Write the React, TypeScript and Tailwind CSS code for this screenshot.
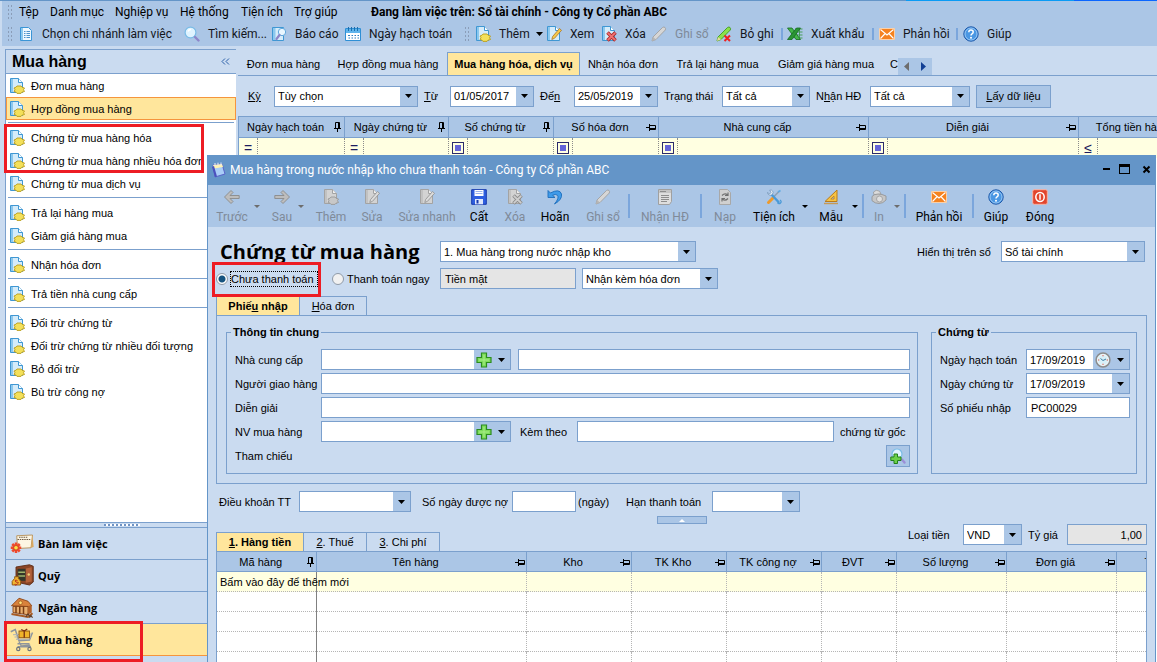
import { useState } from 'react';
import type { ReactNode } from 'react';
import clsx from 'clsx';

/* ---------- icons ---------- */

type IconProps = { gray?: boolean };

function PageShape({ gray }: IconProps) {
  return (
    <>
      <path d="M1.5 .5h8l4 4v10h-12z" fill={gray ? '#d3d3d3' : '#d5ecfa'} stroke={gray ? '#a3a3a3' : '#3f97d3'} />
      <path d="M9.5 .5v4h4" fill={gray ? '#eee' : '#fff'} stroke={gray ? '#a3a3a3' : '#3f97d3'} />
      <path d="M2 1h2v13H2z" fill={gray ? '#c2c2c2' : '#8cc8ee'} />
    </>
  );
}

function Svg({ children, size = 16 }: { children: ReactNode; size?: number }) {
  return (
    <svg width={size} height={size} viewBox="0 0 16 16" fill="none" className="shrink-0">
      {children}
    </svg>
  );
}

const DocNewIcon = ({ gray }: IconProps) => (
  <Svg>
    <PageShape gray={gray} />
    <path
      d="M5 10l2-.8L8 8h4l1 1.2 2.500.8-1 1.700 1 1.800-2.500.7-1 1.200H8l-1-1.200-2-.7 1-1.800z"
      fill={gray ? '#c8c8c8' : '#f3e05a'}
      stroke={gray ? '#999' : '#b99c1c'}
      strokeWidth=".9"
    />
  </Svg>
);

const DocEditIcon = ({ gray }: IconProps) => (
  <Svg>
    <PageShape gray={gray} />
    <path
      d="M13.5 2.5l2 1.8-7 8-2.7 1.2.8-3z"
      fill={gray ? '#dcdcdc' : '#f7c948'}
      stroke={gray ? '#8f8f8f' : '#a8752a'}
      strokeWidth=".8"
    />
  </Svg>
);

const DocDeleteIcon = ({ gray }: IconProps) => (
  <Svg>
    <PageShape gray={gray} />
    <path d="M6.5 6.5l8 8M14.5 6.5l-8 8" stroke={gray ? '#8c8c8c' : '#b02a2a'} strokeWidth="3.6" />
    <path d="M6.8 6.8l7.4 7.4M14.2 6.8l-7.4 7.4" stroke={gray ? '#cfcfcf' : '#ee7373'} strokeWidth="1.8" />
  </Svg>
);

const ListIcon = () => (
  <Svg>
    <path d="M2.5 1.5h8l3 3v10h-11z" fill="#eef8ff" stroke="#3b95d6" />
    <path d="M3 2h2v12H3z" fill="#8cc8ee" />
    <path d="M6 5.5h1.5M8.500 5.5H12M6 7.5h1.5M8.5 7.5H12M6 9.5h1.5M8.5 9.5H12M6 11.5h1.5M8.5 11.5H12" stroke="#4d93cc" />
  </Svg>
);

const SearchIcon = () => (
  <Svg>
    <circle cx="6.5" cy="6.5" r="5.4" fill="#dff3ff" stroke="#79bbe6" strokeWidth="1.2" />
    <path d="M4 5.5a3 3 0 0 1 3-2" stroke="#fff" strokeWidth="1.4" />
    <path d="M11 11l3.500 3.500" stroke="#8d86c9" strokeWidth="2.4" strokeLinecap="round" />
  </Svg>
);

const ReportIcon = () => (
  <Svg>
    <path d="M1.5 1.5h11v13h-11z" fill="#d5ecfa" stroke="#3f97d3" />
    <path d="M2 2h2.500v12H2z" fill="#8cc8ee" />
    <circle cx="11" cy="6" r="3.7" fill="#e9f7ff" stroke="#5fa7dc" />
    <path d="M8.500 9l-3 4" stroke="#8d86c9" strokeWidth="2.2" strokeLinecap="round" />
  </Svg>
);

const CalendarIcon = () => (
  <Svg>
    <path d="M.5 2.500h15v12H.5z" fill="#fff" stroke="#2f8fd5" />
    <path d="M1 3h14v4H1z" fill="#5fb4ec" />
    <path d="M3.5 1v4M6.5 1v4M9.5 1v4M12.5 1v4" stroke="#1c6fae" />
    <path d="M3 9.5h2M6.5 9.5H8M9.5 9.5H11M12.5 9.5H14M3.5 12H5M6.5 12H8M9.5 12H11M12.5 12H14" stroke="#2f7fc0" />
  </Svg>
);

const PencilIcon = ({ gray }: IconProps) => (
  <Svg>
    <path
      d="M1 15l1-4L11.5 1.5q1.5-1 2.5 0t.3 2.5L5 13.5z"
      fill={gray ? '#d6d6d6' : '#8ae04a'}
      stroke={gray ? '#a0a0a0' : '#3f9c1e'}
      strokeWidth=".9"
    />
    <path d="M1 15l1-4 3 2.5z" fill={gray ? '#b5b5b5' : '#e9d9a0'} />
    {!gray && <path d="M8.500 9.5l5.500 5.500M14 9.5L8.500 15" stroke="#ee2020" strokeWidth="2" />}
  </Svg>
);

const ExcelIcon = () => (
  <Svg>
    <path d="M8 3h7.500M9 6h6.500M10 9h5.500M8 12h7.500M12.5 2v12" stroke="#3d9a4a" strokeWidth=".9" />
    <path d="M.5 2H5l8.500 11.500H9z" fill="#43b649" stroke="#156b20" strokeWidth=".8" />
    <path d="M9.500 2h4L5 13.500H.5z" fill="#2a9434" stroke="#156b20" strokeWidth=".8" />
  </Svg>
);

const MailIcon = () => (
  <Svg>
    <path d="M.5 2.500h15v11H.5z" fill="#f5821f" stroke="#fbd0a8" />
    <path d="M1.5 3.5L8 9l6.500-5.500M1.5 12.500l4.700-5M14.500 12.500l-4.700-5" stroke="#fff" strokeWidth="1.1" />
  </Svg>
);

const HelpIcon = () => (
  <Svg>
    <circle cx="8" cy="8" r="7.2" fill="#4a97e3" stroke="#1c57a8" />
    <circle cx="8" cy="8" r="6" stroke="#a9d2f8" strokeWidth=".8" />
    <path d="M5.800 6.200q0-2.200 2.200-2.200t2.200 2q0 1.200-1.200 1.900-1 .6-1 1.600" stroke="#fff" strokeWidth="1.5" />
    <circle cx="8" cy="11.8" r="1" fill="#fff" />
  </Svg>
);

const ArrowIcon = ({ right }: { right?: boolean }) => (
  <Svg>
    <path
      d={right ? 'M15.5 8L9 1.5l-2 2 3 3H.8v3H10l-3 3 2 2z' : 'M.5 8L7 1.5l2 2-3 3h9.200v3H6l3 3-2 2z'}
      fill="#bdbdbd"
      stroke="#8a8a8a"
      strokeWidth=".9"
    />
  </Svg>
);

const SaveIcon = () => (
  <Svg>
    <path d="M.7.7h14.600v14.600H.7z" fill="#2f5fe0" stroke="#1639ac" />
    <path d="M3.5 1h9v6h-9z" fill="#fff" />
    <path d="M4.5 2.5h7M4.5 4.5h7" stroke="#9bb3ee" />
    <path d="M4 10h8v5.300H4z" fill="#dfe7fb" />
    <path d="M5.5 11h2v3.500h-2z" fill="#1639ac" />
  </Svg>
);

const UndoIcon = () => (
  <Svg>
    <path
      d="M1 1.5v7h7L5.600 6.300q3-1.800 4.900 0 2 2.700-3 8.700 8-4.500 7-10Q12.500-.8 3.400 4z"
      fill="#3f9bea"
      stroke="#1d6dbb"
      strokeWidth=".9"
    />
  </Svg>
);

const InvoiceIcon = () => (
  <Svg>
    <path d="M1.5 .5h13v12l-2 3h-11z" fill="#dedede" stroke="#a0a0a0" />
    <path d="M2 1h12v3H2z" fill="#c4c4c4" />
    <path d="M3 2.5h6M4 6.5h8M4 8.5h8M4 10.5h8M4 12.5h6" stroke="#8d8d8d" />
  </Svg>
);

const ReloadIcon = () => (
  <Svg>
    <path d="M2.5 .5h8l3 3v12h-11z" fill="#d0d0d0" stroke="#a8a8a8" />
    <path d="M5 6.500q3-3 5.500-.5M8 6.500h3V3.500M11 9.500q-3 3-5.500.5M8 9.500H5v3" stroke="#707070" strokeWidth="1.2" />
  </Svg>
);

const ToolsIcon = () => (
  <Svg>
    <path d="M13 2.500L7.500 8" stroke="#8da0b5" strokeWidth="1.6" />
    <path d="M7.500 8.500l-5 5" stroke="#ee9a2b" strokeWidth="3" strokeLinecap="round" />
    <path d="M5 5l7.500 8" stroke="#4a9ad8" strokeWidth="2.4" strokeLinecap="round" />
    <path d="M1.5 3.5l2 1.5L5 3.500 3.700 1.200q2-.6 3 .9t-.3 3.200-3.200.7-1.700-2.500z" fill="#e3edf7" stroke="#6c8fb5" strokeWidth=".7" />
    <path d="M11.5 13.500q1.500 2 3 .5t-.5-3" stroke="#4a9ad8" strokeWidth="1.3" />
    <path d="M12 3l2.500-1.500" stroke="#5fa9e0" strokeWidth="1.6" />
  </Svg>
);

const SetSquareIcon = () => (
  <Svg>
    <path d="M14 1v11.500H2z" fill="#f6c343" stroke="#b97a1a" />
    <path d="M11 7.200V10H7.800z" fill="#abc6e6" stroke="#b97a1a" strokeWidth=".8" />
    <path d="M1 14.500h14" stroke="#c79a55" strokeWidth="1.4" />
  </Svg>
);

const PrinterIcon = () => (
  <Svg>
    <path d="M3 6L2.500 3q2.500-3 6-.8L10 5z" fill="#dcdcdc" stroke="#999" strokeWidth=".8" />
    <path d="M1 7.500q2-2.500 6-2.500t8 2v4q-3 3.500-7 3.500t-7-2.800z" fill="#c6c6c6" stroke="#909090" strokeWidth=".8" />
    <circle cx="8.5" cy="10" r="3" fill="#e0e0e0" stroke="#999" strokeWidth=".8" />
  </Svg>
);

const PowerIcon = () => (
  <Svg>
    <rect x=".7" y=".7" width="14.6" height="14.6" rx="1.5" fill="#e2452c" stroke="#f7b3a4" />
    <ellipse cx="8" cy="8" rx="4.2" ry="4.6" stroke="#fff" strokeWidth="1.5" />
    <path d="M8 5.200v5.600" stroke="#fff" strokeWidth="1.5" />
  </Svg>
);

const PlusIcon = () => (
  <Svg>
    <path d="M5.500 1h5v4.500H15v5h-4.500V15h-5v-4.500H1v-5h4.500z" fill="#7fdc5c" stroke="#2b8c1e" strokeWidth="1.2" />
    <path d="M8 3v10M3 8h10" stroke="#a8ee88" />
  </Svg>
);

const ClockIcon = () => (
  <Svg>
    <circle cx="8" cy="8" r="6.9" fill="#d8f0f8" stroke="#8d8d8d" strokeWidth="1.5" />
    <circle cx="8" cy="8" r="5.4" stroke="#f4f4f4" strokeWidth=".9" />
    <path d="M5.500 6.500L8 8.500l3-1.500" stroke="#3f7fa5" />
    <path d="M8 3v1.300M8 11.700V13M3 8h1.300M11.700 8H13" stroke="#e05a4a" />
  </Svg>
);

const SearchAddIcon = () => (
  <Svg>
    <circle cx="7" cy="6" r="5" fill="#dff3ff" stroke="#79bbe6" strokeWidth="1.2" />
    <path d="M12 11.500l2.500 3" stroke="#9b8fd6" strokeWidth="2.4" strokeLinecap="round" />
    <path d="M4 6h3.500v3H11v3.500H7.500v3H4v-3H.8V9H4z" fill="#6bd04a" stroke="#23801a" />
  </Svg>
);

const NoteIcon = () => (
  <Svg>
    <path d="M3 3l9-1 3 10-10 3z" fill="#a9cdf7" stroke="#5a63c8" />
    <path d="M3 3l9-1 1 3-9 1.500z" fill="#fff3b0" />
    <path d="M2 5l3 10 2-.6L4 4z" fill="#4b51bd" />
    <path d="M5 1v3M8 .7v3M11 .5v3" stroke="#e8eefb" />
  </Svg>
);

const DeskIcon = () => (
  <Svg size={24}>
    <path d="M4.500 2.500L15 2l-1 8.500-9 .5z" fill="#fdf6e3" stroke="#b58f56" strokeWidth=".6" />
    <path d="M14 10.500L15 2l.8 8z" fill="#d9a860" />
    <path d="M5 5h8.500M6 3.500h6" stroke="#6d5a44" strokeWidth=".8" strokeDasharray="1 .5" />
    <g stroke="#f04a2c" strokeWidth="1.7">
      <path d="M4 7v7M.5 10.500h7M1.500 8l5 5M6.500 8l-5 5" />
    </g>
    <circle cx="4" cy="10.5" r="1.5" fill="#ffe14a" stroke="#c03a20" strokeWidth=".5" />
  </Svg>
);

const SafeIcon = () => (
  <Svg size={24}>
    <path d="M4 2l9-1.500 2.500 1v10.500l-2.500 2L4 12z" fill="#8a4526" stroke="#5c2a14" strokeWidth=".6" />
    <path d="M5 3.200h5.500v8H5z" fill="#33362a" />
    <path d="M5.500 5.500h4.500M5.500 8h4.500" stroke="#9fb46b" strokeWidth=".9" />
    <path d="M10.500 3l4-.8v9.500l-4 .8z" fill="#b3623a" />
    <circle cx="12.5" cy="7" r=".8" fill="#f3d07a" />
    <path d="M3 8.500h3l-.5 1q2.500 2 1.500 4.500H1.500Q.5 11.500 3.200 9.500z" fill="#f2b632" stroke="#8a5310" strokeWidth=".6" />
    <path d="M5 11q-1.700-.8-1.500.3t1.500.9-.3 1.300-1.300-.3" stroke="#b3261b" strokeWidth=".6" />
  </Svg>
);

const BankIcon = () => (
  <Svg size={24}>
    <path d="M1 6.500L6 1.500l6 2 2.500 3-2 .5z" fill="#d9823c" stroke="#8b4414" strokeWidth=".6" />
    <path d="M2 7h10v5.500L2 11z" fill="#e9b070" stroke="#8b4414" strokeWidth=".6" />
    <path d="M4 7v4.500M6.500 7v4.800M9 7v5" stroke="#7a3c14" strokeWidth="1" />
    <path d="M1 12l11 2 3-2.500" stroke="#a85c24" strokeWidth="1.3" />
    <path d="M12 7l2.500-.5V11L12 12.500z" fill="#b3622a" />
    <circle cx="7" cy="4.5" r="1.2" fill="#ffe07a" stroke="#8b4414" strokeWidth=".4" />
    <path d="M10.500 14l1.500-2 1.500 2M13 14.500l1-1.500 1 1.500" stroke="#5c3a20" strokeWidth=".8" />
  </Svg>
);

const CartIcon = () => (
  <Svg size={24}>
    <path d="M.5 2.500L3.500 1l2.500 7.500L13 8l2-5" stroke="#8d949c" strokeWidth="1" />
    <path d="M2 4.500l12-.5M3 6h11M4 7.500h9" stroke="#aab0b8" strokeWidth=".7" />
    <rect x="6" y="2" width="7" height="4.5" fill="#f0b429" stroke="#8a5310" strokeWidth=".6" />
    <path d="M9.500 2v4.500M7.500 1l2 1 2-1.300" stroke="#7a3212" strokeWidth=".9" />
    <path d="M6 9l1.500 3 6-.5M5 12.500h9M5 10.500h8" stroke="#8d949c" strokeWidth=".9" />
    <circle cx="5.5" cy="14" r="1.1" stroke="#6d747c" strokeWidth=".8" />
    <circle cx="13" cy="14" r="1.1" stroke="#6d747c" strokeWidth=".8" />
  </Svg>
);

const PinIcon = ({ down }: { down?: boolean }) => (
  <svg width="10" height="10" viewBox="0 0 10 10" fill="none" stroke="#000" className="shrink-0">
    {down ? <path d="M3.500 6V.5h4V6M6.500 1v5M2 6.500h7M5.500 7v3" /> : <path d="M4 3.500h5.500v4H4M4 6.500h5M3.500 2v7M3 5.500H0" />}
  </svg>
);

const Caret = ({ gray }: IconProps) => (
  <svg width="7" height="4" viewBox="0 0 7 4" className="shrink-0">
    <path d="M0 0h7L3.500 4z" fill={gray ? '#6d6d6d' : '#000'} />
  </svg>
);

/* ---------- form controls ---------- */

type ComboProps = { id: string; label?: string; value?: string; className: string; extra?: ReactNode };

function Combo({ id, label, value = '', className, extra }: ComboProps) {
  return (
    <div className={clsx('relative h-[21px] border border-[#7ba0cd] bg-white', className)}>
      <select
        id={id}
        aria-label={label}
        defaultValue={value}
        className="block h-full w-full appearance-none bg-transparent pl-[3px] text-[11px] leading-4 outline-none"
      >
        <option>{value}</option>
      </select>
      <span className="pointer-events-none absolute inset-y-0 right-0 flex bg-[#abc6e6]">
        {extra && <span className="flex w-[19px] items-center justify-center">{extra}</span>}
        <span className="flex w-[17px] items-center justify-center">
          <Caret />
        </span>
      </span>
    </div>
  );
}

function Field({ id, label, value, className, readOnly }: { id: string; label?: string; value?: string; className?: string; readOnly?: boolean }) {
  return (
    <input
      id={id}
      type="text"
      aria-label={label}
      defaultValue={value}
      readOnly={readOnly}
      className={clsx(
        'h-[21px] min-w-0 rounded-none border border-[#7ba0cd] px-1 text-[11px] leading-4 outline-none',
        readOnly ? 'bg-[#e5e5e5]' : 'bg-white',
        className,
      )}
    />
  );
}

/* ---------- data ---------- */

const menus = [
  { label: 'Tệp', w: 'w-[31px]' },
  { label: 'Danh mục', w: 'w-[65px]' },
  { label: 'Nghiệp vụ', w: 'w-[65px]' },
  { label: 'Hệ thống', w: 'w-[61px]' },
  { label: 'Tiện ích', w: 'w-[53px]' },
  { label: 'Trợ giúp', w: 'w-[77px]' },
];

const sideGroups = [
  ['Đơn mua hàng', 'Hợp đồng mua hàng'],
  ['Chứng từ mua hàng hóa', 'Chứng từ mua hàng nhiều hóa đơn', 'Chứng từ mua dịch vụ'],
  ['Trả lại hàng mua', 'Giảm giá hàng mua'],
  ['Nhận hóa đơn'],
  ['Trả tiền nhà cung cấp'],
  ['Đối trừ chứng từ', 'Đối trừ chứng từ nhiều đối tượng', 'Bỏ đối trừ', 'Bù trừ công nợ'],
];

const modules = [
  { label: 'Bàn làm việc', icon: <DeskIcon /> },
  { label: 'Quỹ', icon: <SafeIcon /> },
  { label: 'Ngân hàng', icon: <BankIcon /> },
  { label: 'Mua hàng', icon: <CartIcon /> },
];

const listTabs = [
  { label: 'Đơn mua hàng', w: 'w-[91px]' },
  { label: 'Hợp đồng mua hàng', w: 'w-[118px]' },
  { label: 'Mua hàng hóa, dịch vụ', w: 'w-[133px]', active: true },
  { label: 'Nhận hóa đơn', w: 'w-[86px]' },
  { label: 'Trả lại hàng mua', w: 'w-[103px]' },
  { label: 'Giảm giá hàng mua', w: 'w-[114px]' },
];

const listColumns = [
  { label: 'Ngày hạch toán', w: 'w-[106px]', op: '=', down: true },
  { label: 'Ngày chứng từ', w: 'w-[104px]', op: '=', down: true },
  { label: 'Số chứng từ', w: 'w-[105px]', down: true },
  { label: 'Số hóa đơn', w: 'w-[105px]' },
  { label: 'Nhà cung cấp', w: 'w-[210px]' },
  { label: 'Diễn giải', w: 'w-[210px]' },
  { label: 'Tổng tiền hàng', w: 'w-[120px]', op: '≤' },
];

const itemColumns = [
  { label: 'Mã hàng', w: 'w-[99px]', down: true },
  { label: 'Tên hàng', w: 'w-[210px]' },
  { label: 'Kho', w: 'w-[105px]' },
  { label: 'TK Kho', w: 'w-[95px]' },
  { label: 'TK công nợ', w: 'w-[95px]' },
  { label: 'ĐVT', w: 'w-[75px]' },
  { label: 'Số lượng', w: 'w-[110px]' },
  { label: 'Đơn giá', w: 'w-[110px]' },
  { label: 'Thành tiền', w: 'w-[120px]' },
];

/* ---------- main window ---------- */

const Grip = () => (
  <span className="h-4 w-[5px] shrink-0 bg-[radial-gradient(#8a9db8_1px,transparent_1px)] bg-size-[3px_4px]" />
);

const Divider = ({ className }: { className?: string }) => (
  <span className={clsx('w-[2px] shrink-0 bg-[#7ba6dc]', className)} />
);

type ToolProps = { icon: ReactNode; label: string; w: string; disabled?: boolean; caret?: boolean };

function ToolButton({ icon, label, w, disabled, caret }: ToolProps) {
  return (
    <button
      disabled={disabled}
      className={clsx('flex shrink-0 items-center whitespace-nowrap', w, disabled ? 'text-[#7f8a99]' : 'text-[#14161c]')}
    >
      {icon}
      <span className="ml-2">{label}</span>
      {caret && (
        <span className="ml-[6px]">
          <Caret />
        </span>
      )}
    </button>
  );
}

function TopBars() {
  return (
    <header className="flex h-[45px] shrink-0 flex-col overflow-hidden bg-[#abc6e6] pl-[5px] font-[Roboto,'Noto_Sans',sans-serif] text-[12px] leading-4">
      <nav className="flex h-[22px] items-center whitespace-nowrap">
        <Grip />
        <span className="w-[7px] shrink-0" />
        {menus.map((m) => (
          <button key={m.label} className={clsx('shrink-0 text-left', m.w)}>
            {m.label}
          </button>
        ))}
        <strong>Đang làm việc trên: Sổ tài chính - Công ty Cổ phần ABC</strong>
      </nav>
      <div className="flex h-[22px] items-center">
        <Grip />
        <span className="w-[6px] shrink-0" />
        <ToolButton icon={<ListIcon />} label="Chọn chi nhánh làm việc" w="w-[166px]" />
        <ToolButton icon={<SearchIcon />} label="Tìm kiếm..." w="w-[87px]" />
        <ToolButton icon={<ReportIcon />} label="Báo cáo" w="w-[74px]" />
        <ToolButton icon={<CalendarIcon />} label="Ngày hạch toán" w="w-[119px]" />
        <Grip />
        <span className="w-[6px] shrink-0" />
        <ToolButton icon={<DocNewIcon />} label="Thêm" w="w-[71px]" caret />
        <ToolButton icon={<DocEditIcon />} label="Xem" w="w-[55px]" />
        <ToolButton icon={<DocDeleteIcon />} label="Xóa" w="w-[50px]" />
        <ToolButton icon={<PencilIcon gray />} label="Ghi sổ" w="w-[65px]" disabled />
        <ToolButton icon={<PencilIcon />} label="Bỏ ghi" w="w-[65px]" />
        <Divider className="mr-1 h-3" />
        <ToolButton icon={<ExcelIcon />} label="Xuất khẩu" w="w-[85px]" />
        <Divider className="mr-[5px] h-3" />
        <ToolButton icon={<MailIcon />} label="Phản hồi" w="w-[77px]" />
        <Divider className="mr-[5px] h-3" />
        <ToolButton icon={<HelpIcon />} label="Giúp" w="w-[60px]" />
      </div>
    </header>
  );
}

const RedFrame = ({ className }: { className: string }) => (
  <span className={clsx('pointer-events-none absolute z-20 border-3 border-[#ed1c24]', className)} />
);

function Sidebar() {
  const [active, setActive] = useState('Hợp đồng mua hàng');

  return (
    <aside className="flex w-[231px] shrink-0 flex-col border-t border-l border-[#7ba0cd]">
      <div className="flex h-6 shrink-0 items-center justify-between border-b border-[#7ba0cd] px-[6px]">
        <h2 className="text-[16px] leading-5 font-bold">Mua hàng</h2>
        <button aria-label="Thu gọn">
          <svg width="9" height="7" viewBox="0 0 9 7" fill="none" stroke="#2b5fa8">
            <path d="M4 .5l-3 3 3 3M8 .5l-3 3 3 3" />
          </svg>
        </button>
      </div>
      <div className="flex-1 bg-white">
        {sideGroups.map((group, i) => (
          <div key={group[0]} className={clsx('relative', i > 0 && 'pt-[6px]')}>
            {i > 0 && <hr className="absolute inset-x-[2px] top-[2px] border-[#7ba0cd]" />}
            {group.map((item) => (
              <button
                key={item}
                onClick={() => setActive(item)}
                className={clsx(
                  'flex h-[23px] w-full items-center gap-[6px] border pl-[2px] text-left',
                  item === active ? 'border-[#f5953d] bg-[#ffe69c]' : 'border-transparent',
                )}
              >
                <DocNewIcon />
                {item}
              </button>
            ))}
            {i === 1 && <RedFrame className="top-1 -left-[2px] h-[49px] w-[200px]" />}
          </div>
        ))}
      </div>
      <div className="flex h-[6px] shrink-0 items-center border-y border-[#7ba0cd] pl-[98px]">
        <span className="h-[2px] w-9 bg-[repeating-linear-gradient(90deg,#6f93c4_0_2px,#fff_2px_4px)]" />
      </div>
      {modules.map((m, i) => (
        <button
          key={m.label}
          className={clsx(
            "relative flex h-8 shrink-0 items-center gap-1 border-b pl-1 font-['Open_Sans','Noto_Sans',sans-serif] font-bold",
            i === 3 ? 'border-[#f5953d] bg-[#ffe69c]' : 'border-[#7ba0cd]',
          )}
        >
          {m.icon}
          {m.label}
          {i === 3 && <RedFrame className="-top-[3px] -left-[2px] h-[41px] w-[139px]" />}
        </button>
      ))}
      <div className="h-[6px] shrink-0" />
    </aside>
  );
}

function PurchaseList() {
  return (
    <main className="flex min-w-0 flex-1 flex-col overflow-hidden pl-[2px]">
      <div className="flex h-[27px] shrink-0 items-stretch border-b border-[#7ba0cd] pt-[3px] whitespace-nowrap">
        {listTabs.map((t) => (
          <button
            key={t.label}
            className={clsx('shrink-0 text-center', t.w, t.active && 'border border-b-0 border-[#7ba0cd] bg-[#ffe69c] font-bold')}
          >
            {t.label}
          </button>
        ))}
        <span className="w-[15px] shrink-0 self-center pl-[7px]">C</span>
        <span className="flex h-[17px] w-[34px] shrink-0 items-center justify-around self-end bg-[#abc6e6]">
          <button aria-label="Trước">
            <svg width="5" height="9" viewBox="0 0 5 9">
              <path d="M5 0v9L0 4.500z" fill="#6d6d6d" />
            </svg>
          </button>
          <button aria-label="Sau">
            <svg width="5" height="9" viewBox="0 0 5 9">
              <path d="M0 0v9l5-4.500z" fill="#123f94" />
            </svg>
          </button>
        </span>
      </div>
      <div className="flex h-10 shrink-0 items-center pl-[10px] whitespace-nowrap">
        <label htmlFor="ky" className="w-[26px] shrink-0 underline">Kỳ</label>
        <Combo id="ky" value="Tùy chọn" className="mr-[6px] w-36 shrink-0" />
        <label htmlFor="tu" className="w-[26px] shrink-0">
          <u>T</u>ừ
        </label>
        <Combo id="tu" value="01/05/2017" className="mr-[6px] w-[84px] shrink-0" />
        <label htmlFor="den" className="w-[34px] shrink-0">
          Đế<u>n</u>
        </label>
        <Combo id="den" value="25/05/2019" className="mr-[6px] w-[84px] shrink-0" />
        <label htmlFor="trang-thai" className="w-[58px] shrink-0">
          Trạn<u>g</u> thái
        </label>
        <Combo id="trang-thai" value="Tất cả" className="mr-[6px] w-[88px] shrink-0" />
        <label htmlFor="nhan-hd" className="w-[54px] shrink-0">
          N<u>h</u>ận HĐ
        </label>
        <Combo id="nhan-hd" value="Tất cả" className="mr-[6px] w-[100px] shrink-0" />
        <button className="h-[23px] w-[75px] shrink-0 border border-[#7ba0cd] bg-[#abc6e6]">
          <u>L</u>ấy dữ liệu
        </button>
      </div>
      <table className="w-[961px] table-fixed border-collapse border-l border-[#7ba0cd]">
        <thead>
          <tr className="h-[21px] border-y border-[#7ba0cd] bg-[#abc6e6]">
            {listColumns.map((c) => (
              <th key={c.label} className={clsx('border-r border-[#7ba0cd] p-0 font-normal', c.w)}>
                <span className="flex items-center pr-[2px]">
                  <span className="flex-1 text-center">{c.label}</span>
                  <PinIcon down={c.down} />
                </span>
              </th>
            ))}
          </tr>
        </thead>
        <tbody>
          <tr className="bg-[#ffffe1]">
            {listColumns.map((c) => (
              <td key={c.label} className="border-r border-dotted border-[#8c8c8c] p-0">
                <span className="flex h-5 w-[19px] items-center justify-center border-r border-dotted border-[#8c8c8c] text-[14px] leading-4 text-[#1d1d5e]">
                  {c.op ?? <span className="size-3 border border-[#2b2b6b] bg-[#6464d8] bg-clip-content p-[2px]" />}
                </span>
              </td>
            ))}
          </tr>
        </tbody>
      </table>
      <div className="flex-1 bg-white" />
    </main>
  );
}

/* ---------- voucher window ---------- */

type DlgTool = { label: string; icon: ReactNode; w: string; off?: boolean };

function DlgButton({ label, icon, w, off }: DlgTool) {
  return (
    <button
      disabled={off}
      className={clsx('flex shrink-0 flex-col items-center gap-1 whitespace-nowrap', w, off ? 'text-[#7f8a99]' : 'text-black')}
    >
      {icon}
      <span>{label}</span>
    </button>
  );
}

const DropMark = ({ className, gray }: { className: string; gray?: boolean }) => (
  <span className={clsx('flex w-[6px] shrink-0 pt-[16px]', className)}>
    <svg width="6" height="3" viewBox="0 0 6 3">
      <path d="M0 0h6L3 3z" fill={gray ? '#6d6d6d' : '#000'} />
    </svg>
  </span>
);

function DialogToolbar() {
  return (
    <div className="flex h-[42px] shrink-0 bg-[#abc6e6] pt-1 pl-2 font-[Roboto,'Noto_Sans',sans-serif] text-[12px] leading-4">
      <DlgButton label="Trước" icon={<ArrowIcon />} w="w-8" off />
      <DropMark className="mx-[6px]" gray />
      <DlgButton label="Sau" icon={<ArrowIcon right />} w="w-8" off />
      <DropMark className="mr-2" gray />
      <DlgButton label="Thêm" icon={<DocNewIcon gray />} w="w-[38px]" off />
      <DlgButton label="Sửa" icon={<DocEditIcon gray />} w="w-11" off />
      <DlgButton label="Sửa nhanh" icon={<DocEditIcon gray />} w="w-[66px]" off />
      <DlgButton label="Cất" icon={<SaveIcon />} w="w-[38px]" />
      <DlgButton label="Xóa" icon={<DocDeleteIcon gray />} w="w-[34px]" off />
      <DlgButton label="Hoãn" icon={<UndoIcon />} w="w-[46px]" />
      <DlgButton label="Ghi sổ" icon={<PencilIcon gray />} w="w-[50px]" off />
      <Divider className="mt-[5px] h-6" />
      <DlgButton label="Nhận HĐ" icon={<InvoiceIcon />} w="w-[70px]" off />
      <Divider className="mt-[5px] h-6" />
      <DlgButton label="Nạp" icon={<ReloadIcon />} w="w-[46px]" off />
      <DlgButton label="Tiện ích" icon={<ToolsIcon />} w="w-[52px]" />
      <DropMark className="mx-[2px]" />
      <DlgButton label="Mẫu" icon={<SetSquareIcon />} w="w-[42px]" />
      <DropMark className="mr-1" />
      <Divider className="mt-[5px] h-6" />
      <DlgButton label="In" icon={<PrinterIcon />} w="w-[30px]" off />
      <DropMark className="mr-1" gray />
      <Divider className="mt-[5px] h-6" />
      <DlgButton label="Phản hồi" icon={<MailIcon />} w="w-[66px]" />
      <Divider className="mt-[5px] h-6" />
      <DlgButton label="Giúp" icon={<HelpIcon />} w="w-11" />
      <DlgButton label="Đóng" icon={<PowerIcon />} w="w-11" />
    </div>
  );
}

function Radio({ label, checked, onChange }: { label: string; checked: boolean; onChange: () => void }) {
  return (
    <label className="flex items-center gap-[2px]">
      <input
        type="radio"
        name="payment"
        checked={checked}
        onChange={onChange}
        className="size-3 appearance-none rounded-full border border-[#8f9aa8] bg-[#f1f1f1] checked:bg-[radial-gradient(circle,#16537f_0_3px,#fff_4px)]"
      />
      <span className={clsx('border border-dotted pr-[3px] leading-[14px]', checked ? 'border-black' : 'border-transparent')}>
        {label}
      </span>
    </label>
  );
}

const groupBox = 'h-[150px] min-w-0 border border-[#7ba0cd] pb-[6px]';

function ReceiptPanel() {
  return (
    <div className="flex h-[169px] gap-[13px] border border-[#7ba0cd] px-[9px] pt-2">
      <fieldset className={clsx(groupBox, 'flex-1 pr-[7px] pl-2')}>
        <legend className="-ml-1 px-[2px] leading-[17px] font-bold">Thông tin chung</legend>
        <div className="mt-2 flex flex-col gap-[3px]">
          <div className="flex items-center">
            <label htmlFor="ncc" className="w-[86px] shrink-0">Nhà cung cấp</label>
            <Combo id="ncc" className="mr-[7px] w-[190px] shrink-0" extra={<PlusIcon />} />
            <Field id="ten-ncc" label="Tên nhà cung cấp" className="flex-1" />
          </div>
          <div className="flex items-center">
            <label htmlFor="nguoi-giao" className="w-[86px] shrink-0">Người giao hàng</label>
            <Field id="nguoi-giao" className="flex-1" />
          </div>
          <div className="flex items-center">
            <label htmlFor="dien-giai" className="w-[86px] shrink-0">Diễn giải</label>
            <Field id="dien-giai" className="flex-1" />
          </div>
          <div className="flex items-center">
            <label htmlFor="nv" className="w-[86px] shrink-0">NV mua hàng</label>
            <Combo id="nv" className="mr-[9px] w-[190px] shrink-0" extra={<PlusIcon />} />
            <label htmlFor="kem-theo" className="w-[57px] shrink-0">Kèm theo</label>
            <Field id="kem-theo" className="flex-1" />
            <span className="w-[76px] shrink-0 pl-[6px]">chứng từ gốc</span>
          </div>
          <div className="flex items-center justify-between">
            <span>Tham chiếu</span>
            <button aria-label="Chọn tham chiếu" className="flex h-[22px] w-6 items-center justify-center border border-[#7ba0cd] bg-[#abc6e6]">
              <SearchAddIcon />
            </button>
          </div>
        </div>
      </fieldset>
      <fieldset className={clsx(groupBox, 'w-[206px] shrink-0 pr-[6px] pl-2')}>
        <legend className="-ml-1 px-[2px] leading-[17px] font-bold">Chứng từ</legend>
        <div className="mt-2 flex flex-col gap-[3px]">
          <div className="flex items-center">
            <label htmlFor="ngay-ht" className="w-[86px] shrink-0">Ngày hạch toán</label>
            <Combo id="ngay-ht" value="17/09/2019" className="flex-1" extra={<ClockIcon />} />
          </div>
          <div className="flex items-center">
            <label htmlFor="ngay-ct" className="w-[86px] shrink-0">Ngày chứng từ</label>
            <Combo id="ngay-ct" value="17/09/2019" className="flex-1" />
          </div>
          <div className="flex items-center">
            <label htmlFor="so-phieu" className="w-[86px] shrink-0">Số phiếu nhập</label>
            <Field id="so-phieu" value="PC00029" className="flex-1" />
          </div>
        </div>
      </fieldset>
    </div>
  );
}

function ItemGrid() {
  return (
    <div className="flex-1 overflow-hidden border-x border-[#7ba0cd] bg-white">
      <table className="w-[1019px] table-fixed border-collapse">
        <thead>
          <tr className="h-5 border-y border-[#7ba0cd] bg-[#abc6e6]">
            {itemColumns.map((c) => (
              <th key={c.label} className={clsx('border-r border-[#7ba0cd] p-0 font-normal', c.w)}>
                <span className="flex items-center pr-px">
                  <span className="flex-1 text-center">{c.label}</span>
                  <PinIcon down={c.down} />
                </span>
              </th>
            ))}
          </tr>
        </thead>
        <tbody>
          {[0, 1, 2, 3, 4, 5].map((row) => (
            <tr key={row} className={clsx('h-5 border-b border-dotted border-[#b5b5b5]', row === 0 && 'bg-[#ffffe1]')}>
              {itemColumns.map((c, i) => (
                <td
                  key={c.label}
                  className={clsx('border-r p-0 whitespace-nowrap', i === 0 ? 'border-solid border-[#808080] pl-[3px]' : 'border-dotted border-[#b5b5b5]')}
                >
                  {row === 0 && i === 0 && 'Bấm vào đây để thêm mới'}
                </td>
              ))}
            </tr>
          ))}
        </tbody>
      </table>
    </div>
  );
}

function VoucherWindow() {
  const [paid, setPaid] = useState(false);
  const tab = 'h-full border border-b-0 border-[#7ba0cd] text-center';
  const tabOn = 'bg-[#ffe69c] font-bold';

  return (
    <section className="absolute top-[155px] right-px bottom-0 left-[207px] z-10 flex flex-col overflow-hidden border-x border-[#6495c8] bg-[#cadbf0]">
      <div className="flex h-[30px] shrink-0 items-center bg-[#6495c8] pr-1 pl-[2px] font-[Roboto,'Noto_Sans',sans-serif] text-[12px] text-white">
        <NoteIcon />
        <span className="ml-1 flex-1">Mua hàng trong nước nhập kho chưa thanh toán - Công ty Cổ phần ABC</span>
        <span className="flex items-center gap-[9px] pb-[2px]">
          <button aria-label="Thu nhỏ" className="h-[2px] w-[7px] bg-black" />
          <button aria-label="Phóng to" className="h-[10px] w-[11px] border border-t-3 border-black" />
          <button aria-label="Đóng cửa sổ" className="ml-[3px]">
            <svg width="9" height="9" viewBox="0 0 9 9">
              <path d="M1.5 1.5l6 6M7.5 1.5l-6 6" stroke="#000" strokeWidth="2" />
            </svg>
          </button>
        </span>
      </div>
      <DialogToolbar />
      <div className="flex min-h-0 flex-1 flex-col px-2 pt-[14px]">
        <div className="flex h-[21px] shrink-0 items-center">
          <h1 className="w-56 shrink-0 pl-1 font-['Open_Sans','Noto_Sans',sans-serif] text-[20px] leading-6 font-bold whitespace-nowrap">
            Chứng từ mua hàng
          </h1>
          <Combo id="loai" label="Loại chứng từ" value="1. Mua hàng trong nước nhập kho" className="w-64 shrink-0" />
          <span className="flex-1" />
          <label htmlFor="so" className="w-[84px]">Hiển thị trên sổ</label>
          <Combo id="so" value="Sổ tài chính" className="mr-[2px] w-36" />
        </div>
        <div className="mt-[6px] flex h-[21px] shrink-0 items-center">
          <div className="relative w-[116px] shrink-0">
            <Radio label="Chưa thanh toán" checked={!paid} onChange={() => setPaid(false)} />
            <RedFrame className="-top-[9px] -left-1 h-[35px] w-[109px]" />
          </div>
          <div className="w-[108px] shrink-0">
            <Radio label="Thanh toán ngay" checked={paid} onChange={() => setPaid(true)} />
          </div>
          <Field id="hinh-thuc" label="Hình thức thanh toán" value="Tiền mặt" readOnly className="mr-[6px] w-[136px] shrink-0" />
          <Combo id="nhan-kem" label="Hóa đơn kèm" value="Nhận kèm hóa đơn" className="w-[136px] shrink-0" />
        </div>
        <div className="mt-[7px] flex h-[19px] shrink-0">
          <button className={clsx(tab, tabOn, 'w-[83px] border-r-0')}>
            Phiế<u>u</u> nhập
          </button>
          <button className={clsx(tab, 'w-[68px]')}>
            <u>H</u>óa đơn
          </button>
        </div>
        <ReceiptPanel />
        <div className="mt-[7px] flex h-[21px] shrink-0 items-center pl-[3px]">
          <label htmlFor="dieu-khoan" className="w-20 shrink-0">Điều khoản TT</label>
          <Combo id="dieu-khoan" className="mr-[11px] w-28 shrink-0" />
          <label htmlFor="so-ngay" className="w-[90px] shrink-0">Số ngày được nợ</label>
          <Field id="so-ngay" className="w-16 shrink-0" />
          <span className="w-[50px] shrink-0 pl-[2px]">(ngày)</span>
          <label htmlFor="han-tt" className="w-[86px] shrink-0">Hạn thanh toán</label>
          <Combo id="han-tt" className="w-[88px] shrink-0" />
        </div>
        <div className="mt-1 flex h-2 shrink-0 justify-center">
          <button aria-label="Thu gọn" className="flex w-[50px] items-center justify-center border border-[#7ba0cd] bg-[#abc6e6]">
            <svg width="6" height="3" viewBox="0 0 6 3">
              <path d="M0 3h6L3 0z" fill="#fff" />
            </svg>
          </button>
        </div>
        <div className="flex h-[27px] shrink-0 items-start">
          <div className="flex h-[19px] self-end">
            <button className={clsx(tab, tabOn, 'w-[87px] border-r-0')}>
              <u>1</u>. Hàng tiền
            </button>
            <button className={clsx(tab, 'w-[63px] border-r-0')}>
              <u>2</u>. Thuế
            </button>
            <button className={clsx(tab, 'w-[74px]')}>
              <u>3</u>. Chi phí
            </button>
          </div>
          <span className="flex-1" />
          <div className="flex items-center">
            <label htmlFor="loai-tien" className="w-[55px]">Loại tiền</label>
            <Combo id="loai-tien" value="VND" className="mr-[6px] w-[59px]" />
            <label htmlFor="ty-gia" className="w-[39px]">Tỷ giá</label>
            <Field id="ty-gia" value="1,00" readOnly className="w-20 text-right" />
          </div>
        </div>
        <ItemGrid />
      </div>
    </section>
  );
}

export default function App() {
  return (
    <div className="relative flex h-screen flex-col overflow-hidden bg-[#cadbf0] font-['Liberation_Sans',Arial,sans-serif] text-[11px] leading-4 text-black">
      <div className="flex h-px shrink-0 justify-end bg-[#6495c8]">
        <span className="w-[168px] bg-[#0a9bf5]" />
        <span className="w-[83px] bg-[#0b66ff]" />
      </div>
      <div className="flex min-h-0 flex-1 flex-col pl-[2px]">
        <TopBars />
        <div className="flex min-h-0 flex-1 pt-[3px] pl-[3px]">
          <Sidebar />
          <PurchaseList />
        </div>
      </div>
      <VoucherWindow />
    </div>
  );
}
